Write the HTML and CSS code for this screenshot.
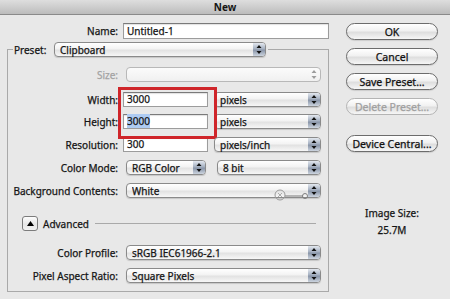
FILE: index.html
```html
<!DOCTYPE html>
<html lang="en">
<head>
  <meta charset="UTF-8" />
  <meta name="viewport" content="width=device-width, initial-scale=1.0" />
  <title>New</title>
  <link rel="stylesheet" href="styles.css">
</head>
<body>
  <div class="titlebar">New</div>

  <div class="dialog">
    <div class="main">
      <div class="row name-row">
        <span class="label">Name:</span>
        <div class="field name-field">Untitled-1</div>
      </div>

      <fieldset class="preset">
        <legend>
          <span class="legend-label">Preset:</span>
          <div class="popup preset-popup">
            <span class="value">Clipboard</span>
            <i class="stepper"><svg width="6" height="11" viewBox="0 0 6 11"><path d="M3 1 L5.5 4 L0.5 4 Z M3 10 L5.5 7 L0.5 7 Z"/></svg></i>
          </div>
        </legend>

        <div class="rows">
          <div class="row disabled">
            <span class="label">Size:</span>
            <div class="popup full">
              <span class="value"></span>
              <i class="stepper"><svg width="6" height="11" viewBox="0 0 6 11"><path d="M3 1 L5.5 4 L0.5 4 Z M3 10 L5.5 7 L0.5 7 Z"/></svg></i>
            </div>
          </div>

          <div class="highlight">
            <div class="row">
              <span class="label">Width:</span>
              <div class="field num-field">3000</div>
              <div class="popup unit">
                <span class="value">pixels</span>
                <i class="stepper"><svg width="6" height="11" viewBox="0 0 6 11"><path d="M3 1 L5.5 4 L0.5 4 Z M3 10 L5.5 7 L0.5 7 Z"/></svg></i>
              </div>
            </div>
            <div class="row">
              <span class="label">Height:</span>
              <div class="field num-field"><span class="selected">3000</span></div>
              <div class="popup unit">
                <span class="value">pixels</span>
                <i class="stepper"><svg width="6" height="11" viewBox="0 0 6 11"><path d="M3 1 L5.5 4 L0.5 4 Z M3 10 L5.5 7 L0.5 7 Z"/></svg></i>
              </div>
            </div>
          </div>

          <div class="row">
            <span class="label">Resolution:</span>
            <div class="field num-field">300</div>
            <div class="popup unit">
              <span class="value">pixels/inch</span>
              <i class="stepper"><svg width="6" height="11" viewBox="0 0 6 11"><path d="M3 1 L5.5 4 L0.5 4 Z M3 10 L5.5 7 L0.5 7 Z"/></svg></i>
            </div>
          </div>

          <div class="row">
            <span class="label">Color Mode:</span>
            <div class="popup mode">
              <span class="value">RGB Color</span>
              <i class="stepper"><svg width="6" height="11" viewBox="0 0 6 11"><path d="M3 1 L5.5 4 L0.5 4 Z M3 10 L5.5 7 L0.5 7 Z"/></svg></i>
            </div>
            <div class="popup depth">
              <span class="value">8 bit</span>
              <i class="stepper"><svg width="6" height="11" viewBox="0 0 6 11"><path d="M3 1 L5.5 4 L0.5 4 Z M3 10 L5.5 7 L0.5 7 Z"/></svg></i>
            </div>
          </div>

          <div class="row">
            <span class="label">Background Contents:</span>
            <div class="popup full">
              <span class="value">White</span>
              <i class="stepper"><svg width="6" height="11" viewBox="0 0 6 11"><path d="M3 1 L5.5 4 L0.5 4 Z M3 10 L5.5 7 L0.5 7 Z"/></svg></i>
              <svg class="slider-mark" width="40" height="14" viewBox="0 0 40 14">
                <circle cx="7" cy="8" r="5" fill="none" stroke="#9a9a9a" stroke-width="1"/>
                <path d="M5 6 L9 10 M9 6 L5 10" stroke="#9a9a9a" stroke-width="0.8"/>
                <path d="M12 9 L30 9" stroke="#8a8a8a" stroke-width="1.2"/>
                <circle cx="32" cy="9" r="2.5" fill="none" stroke="#7d7d7d" stroke-width="1"/>
              </svg>
            </div>
          </div>

          <div class="row advanced">
            <div class="disclosure"><svg width="7" height="5" viewBox="0 0 7 5"><path d="M3.5 0 L7 5 L0 5 Z"/></svg></div>
            <span class="adv-label">Advanced</span>
            <div class="rule"></div>
          </div>

          <div class="row profile">
            <span class="label">Color Profile:</span>
            <div class="popup full">
              <span class="value">sRGB IEC61966-2.1</span>
              <i class="stepper"><svg width="6" height="11" viewBox="0 0 6 11"><path d="M3 1 L5.5 4 L0.5 4 Z M3 10 L5.5 7 L0.5 7 Z"/></svg></i>
            </div>
          </div>

          <div class="row">
            <span class="label">Pixel Aspect Ratio:</span>
            <div class="popup full">
              <span class="value">Square Pixels</span>
              <i class="stepper"><svg width="6" height="11" viewBox="0 0 6 11"><path d="M3 1 L5.5 4 L0.5 4 Z M3 10 L5.5 7 L0.5 7 Z"/></svg></i>
            </div>
          </div>
        </div>
      </fieldset>
    </div>

    <div class="side">
      <button class="btn">OK</button>
      <button class="btn">Cancel</button>
      <button class="btn">Save Preset...</button>
      <button class="btn" disabled>Delete Preset...</button>
      <button class="btn device">Device Central...</button>
      <div class="image-size">
        <div>Image Size:</div>
        <div>25.7M</div>
      </div>
    </div>
  </div>
</body>
</html>
```

FILE: styles.css
```css
* {
  box-sizing: border-box;
}

body {
  margin: 0;
  width: 450px;
  height: 299px;
  overflow: hidden;
  background: #e8e8e8;
  font-family: "Noto Sans", "DejaVu Sans", sans-serif;
  font-size: 10px;
  color: #151515;
  -webkit-text-stroke: 0.25px currentColor;
}

.titlebar {
  height: 15px;
  line-height: 14px;
  text-align: center;
  font-weight: bold;
  -webkit-text-stroke: 0;
  background: linear-gradient(#dedede, #bcbcbc);
  border-bottom: 1px solid #8a8a8a;
}

.dialog {
  display: flex;
}

.main {
  width: 336px;
  padding-top: 8px;
}

.side {
  width: 92px;
  margin-left: 10px;
  padding-top: 8px;
  display: flex;
  flex-direction: column;
  gap: 8px;
}

/* rows */
.row {
  display: flex;
  align-items: center;
  height: 15px;
}

.label {
  flex-shrink: 0;
  width: 115px;
  padding-right: 5px;
  text-align: right;
  white-space: nowrap;
}

.name-row {
  height: 16px;
}

.name-row .label {
  width: 123px;
}

.disabled .label {
  color: #a3a3a3;
}

/* text fields */
.field {
  height: 15px;
  line-height: 13px;
  padding-left: 3px;
  background: #fff;
  border: 1px solid #9c9c9c;
  border-top-color: #7a7a7a;
  box-shadow: inset 0 1px 1px rgba(0, 0, 0, 0.12);
}

.name-field {
  width: 206px;
  height: 16px;
  line-height: 14px;
}

.num-field {
  width: 85px;
}

.selected {
  background: #aecbf2;
}

/* pop-up menus */
.popup {
  position: relative;
  display: flex;
  align-items: center;
  height: 15px;
  margin-left: 3px;
  padding-left: 5px;
  border: 1px solid #8a8a8a;
  border-radius: 4px;
  background: linear-gradient(#ffffff, #f3f3f3 45%, #e2e2e2 55%, #f7f7f7);
  box-shadow: 0 1px 1px rgba(0, 0, 0, 0.15);
}

.popup .value {
  flex: 1;
  white-space: nowrap;
  overflow: hidden;
}

.stepper {
  display: flex;
  align-items: center;
  justify-content: center;
  width: 12px;
  height: 13px;
  border-radius: 0 3px 3px 0;
  background: linear-gradient(#e3e8ef, #a5b0c1 45%, #8995a8 55%, #ccd4df);
}

.stepper svg {
  fill: #111;
}

.disabled .popup {
  border-color: #b8b8b8;
  background: linear-gradient(#fbfbfb, #f0f0f0);
  box-shadow: none;
}

.disabled .stepper {
  background: none;
}

.disabled .stepper svg {
  fill: #9c9c9c;
}

.full {
  width: 195px;
}

.unit {
  width: 107px;
  margin-left: 6px;
}

.mode {
  width: 80px;
}

.depth {
  width: 104px;
  margin-left: 11px;
}

.slider-mark {
  position: absolute;
  left: 146px;
  top: 3px;
}

/* preset group */
.preset {
  width: 322px;
  margin: 3px 0 0 7px;
  padding: 10px 0 8px 0;
  border: 1px solid #a9a9a9;
}

.preset legend {
  display: flex;
  align-items: center;
  margin-left: 5px;
  padding: 0 2px 0 1px;
}

.legend-label {
  width: 37px;
}

.preset-popup {
  width: 212px;
  margin-left: 3px;
}

.rows {
  display: flex;
  flex-direction: column;
  gap: 8px;
}

.highlight {
  position: relative;
  display: flex;
  flex-direction: column;
  gap: 7px;
  margin-top: 2px;
}

.highlight::after {
  content: "";
  position: absolute;
  left: 110px;
  top: -5px;
  width: 93px;
  height: 46px;
  border: 3px solid #cf252a;
}

.advanced {
  margin-top: 10px;
}

.disclosure {
  display: flex;
  align-items: center;
  justify-content: center;
  width: 16px;
  height: 15px;
  margin-left: 14px;
  border: 1px solid #7c7c7c;
  border-radius: 3px;
  background: linear-gradient(#fdfdfd, #e6e6e6 55%, #f2f2f2);
}

.adv-label {
  margin-left: 5px;
}

.rule {
  flex: 1;
  height: 1px;
  margin: 0 12px 0 6px;
  background: #a9a9a9;
}

.profile {
  margin-top: 6px;
}

/* buttons */
.btn {
  height: 17px;
  padding: 0;
  font-family: inherit;
  font-size: 10.5px;
  color: #111;
  -webkit-text-stroke: 0.25px currentColor;
  border: 1px solid #6c6c6c;
  border-radius: 9px;
  background: linear-gradient(#ffffff, #f1f1f1 45%, #dedede 55%, #f6f6f6);
  box-shadow: 0 1px 1px rgba(0, 0, 0, 0.12);
}

.btn:disabled {
  color: #a0a0a0;
  border-color: #b4b4b4;
  box-shadow: none;
}

.device {
  margin-top: 12px;
}

.image-size {
  margin-top: 45px;
  line-height: 17px;
  text-align: center;
}
```
